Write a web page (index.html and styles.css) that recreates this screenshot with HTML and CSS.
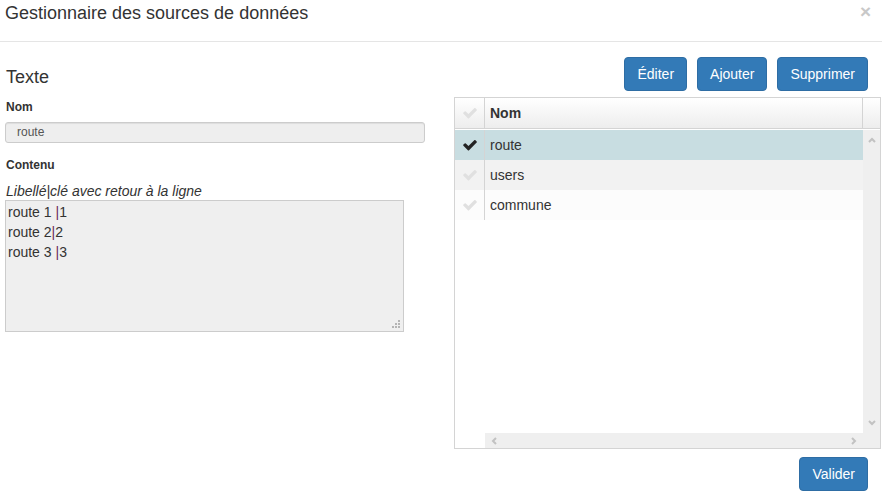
FILE: index.html
```html
<!DOCTYPE html>
<html lang="fr">
<head>
<meta charset="utf-8">
<title>Gestionnaire des sources de données</title>
<link rel="stylesheet" href="styles.css">
</head>
<body>
<div class="modal">
  <div class="modal-header">
    <h4 class="modal-title">Gestionnaire des sources de données</h4>
    <span class="close">×</span>
  </div>
  <div class="modal-body">
    <div class="left">
      <h3 class="section-title">Texte</h3>
      <div class="lbl">Nom</div>
      <div class="input">route</div>
      <div class="lbl lbl-contenu">Contenu</div>
      <div class="hint">Libellé|clé avec retour à la ligne</div>
      <div class="textarea">
        <div class="ta-line">route 1 <span class="pipe">|</span>1</div>
        <div class="ta-line">route 2<span class="pipe">|</span>2</div>
        <div class="ta-line">route 3 <span class="pipe">|</span>3</div>
        <svg class="grip" width="8" height="8" viewBox="0 0 8 8"><rect x="6" y="0" width="2" height="2"/><rect x="3" y="3" width="2" height="2"/><rect x="6" y="3" width="2" height="2"/><rect x="0" y="6" width="2" height="2"/><rect x="3" y="6" width="2" height="2"/><rect x="6" y="6" width="2" height="2"/></svg>
      </div>
    </div>
    <div class="right">
      <div class="toolbar">
        <button class="btn">Éditer</button>
        <button class="btn">Ajouter</button>
        <button class="btn">Supprimer</button>
      </div>
      <div class="grid">
        <div class="grid-head">
          <div class="hcell-check"><svg class="chk chk-light" viewBox="100 380 1580 1160"><path d="M1671 566q0 40-28 68l-724 724-136 136q-28 28-68 28t-68-28l-136-136-362-362q-28-28-28-68t28-68l136-136q28-28 68-28t68 28l294 295 656-657q28-28 68-28t68 28l136 136q28 28 28 68z"/></svg></div>
          <div class="hcell-name">Nom</div>
          <div class="hcell-scroll"></div>
        </div>
        <div class="grid-body">
          <div class="grid-main">
            <div class="grid-rows">
              <div class="row row-sel">
                <div class="cell-check"><svg class="chk chk-dark" viewBox="100 380 1580 1160"><path d="M1671 566q0 40-28 68l-724 724-136 136q-28 28-68 28t-68-28l-136-136-362-362q-28-28-28-68t28-68l136-136q28-28 68-28t68 28l294 295 656-657q28-28 68-28t68 28l136 136q28 28 28 68z"/></svg></div>
                <div class="cell-name">route</div>
              </div>
              <div class="row row-alt">
                <div class="cell-check"><svg class="chk chk-light" viewBox="100 380 1580 1160"><path d="M1671 566q0 40-28 68l-724 724-136 136q-28 28-68 28t-68-28l-136-136-362-362q-28-28-28-68t28-68l136-136q28-28 68-28t68 28l294 295 656-657q28-28 68-28t68 28l136 136q28 28 28 68z"/></svg></div>
                <div class="cell-name">users</div>
              </div>
              <div class="row row-plain">
                <div class="cell-check"><svg class="chk chk-light" viewBox="100 380 1580 1160"><path d="M1671 566q0 40-28 68l-724 724-136 136q-28 28-68 28t-68-28l-136-136-362-362q-28-28-28-68t28-68l136-136q28-28 68-28t68 28l294 295 656-657q28-28 68-28t68 28l136 136q28 28 28 68z"/></svg></div>
                <div class="cell-name">commune</div>
              </div>
            </div>
            <div class="hscroll-row">
              <div class="hscroll-spacer"></div>
              <div class="hscroll">
                <svg class="arrow" width="6" height="8" viewBox="0 0 6 8"><polyline points="5,1 2,4 5,7"/></svg>
                <svg class="arrow" width="6" height="8" viewBox="0 0 6 8"><polyline points="1,1 4,4 1,7"/></svg>
              </div>
            </div>
          </div>
          <div class="vscroll">
            <svg class="arrow" width="8" height="6" viewBox="0 0 8 6"><polyline points="1,5 4,2 7,5"/></svg>
            <svg class="arrow arrow-down" width="8" height="6" viewBox="0 0 8 6"><polyline points="1,1 4,4 7,1"/></svg>
          </div>
        </div>
      </div>
      <div class="footer">
        <button class="btn">Valider</button>
      </div>
    </div>
  </div>
</div>
</body>
</html>
```

FILE: styles.css
```css
* { box-sizing: border-box; }

body {
  margin: 0;
  background: #fff;
  font-family: "Liberation Sans", Arial, Helvetica, sans-serif;
  font-size: 14px;
  color: #333;
}

.modal {
  width: 882px;
  height: 499px;
  overflow: hidden;
}

.modal-header {
  display: flex;
  justify-content: space-between;
  align-items: flex-start;
  height: 42px;
  padding: 3px 11px 0 5px;
  border-bottom: 1px solid #e5e5e5;
}

.modal-title {
  margin: 0;
  font-size: 18px;
  font-weight: normal;
  line-height: 20px;
  color: #333;
}

.close {
  margin-top: -2px;
  font-size: 19px;
  font-weight: bold;
  line-height: 22px;
  color: #c8c8c8;
}

.modal-body {
  display: flex;
  padding-left: 5px;
}

.left {
  width: 420px;
  padding-top: 25px;
}

.section-title {
  margin: 0;
  padding-left: 1px;
  font-size: 18px;
  font-weight: normal;
  line-height: 20px;
  color: #333;
}

.lbl {
  margin-top: 13px;
  padding-left: 1px;
  font-size: 12px;
  font-weight: bold;
  line-height: 14px;
  color: #333;
}

.input {
  margin-top: 8px;
  height: 21px;
  padding: 0 11px;
  border: 1px solid #ccc;
  border-radius: 3px;
  background: #eee;
  box-shadow: inset 0 1px 1px rgba(0, 0, 0, 0.075);
  font-size: 12px;
  line-height: 19px;
  color: #555;
}

.lbl-contenu {
  margin-top: 15px;
}

.hint {
  margin-top: 11px;
  padding-left: 1px;
  font-size: 14px;
  font-style: italic;
  line-height: 16px;
  color: #333;
}

.textarea {
  position: relative;
  margin-top: 1px;
  width: 399px;
  height: 132px;
  padding: 1px 2px;
  border: 1px solid #ccc;
  background: #efefef;
  font-size: 14px;
  line-height: 20px;
  color: #333;
}

.pipe { color: #6b2a5a; }

.grip {
  position: absolute;
  right: 3px;
  bottom: 3px;
  fill: #b4b4b4;
}

.right {
  width: 427px;
  margin-left: 29px;
  padding-top: 15px;
}

.toolbar {
  display: flex;
  justify-content: flex-end;
  gap: 10px;
  padding-right: 13px;
}

.btn {
  height: 34px;
  padding: 6px 12px;
  border: 1px solid #2e6da4;
  border-radius: 4px;
  background: #337ab7;
  color: #fff;
  font-family: "Liberation Sans", Arial, Helvetica, sans-serif;
  font-size: 14px;
  line-height: 20px;
}

.grid {
  display: flex;
  flex-direction: column;
  margin-top: 6px;
  height: 352px;
  border: 1px solid #d4d4d4;
}

.grid-head {
  display: flex;
  height: 31px;
  border-bottom: 1px solid #d4d4d4;
  background: linear-gradient(#ffffff, #ededed);
}

.hcell-check {
  display: flex;
  align-items: center;
  justify-content: center;
  width: 30px;
  border-right: 1px solid #d4d4d4;
}

.hcell-name {
  flex: 1;
  padding-left: 5px;
  border-right: 1px solid #d4d4d4;
  font-weight: bold;
  line-height: 30px;
  color: #333;
}

.hcell-scroll { width: 17px; }

.grid-body {
  display: flex;
  flex: 1;
  padding-top: 1px;
}

.grid-main {
  display: flex;
  flex-direction: column;
  flex: 1;
}

.grid-rows { flex: 1; }

.row {
  display: flex;
  height: 30px;
}

.row-sel { background: #c8dde1; }
.row-alt { background: #f2f2f2; }
.row-plain { background: #fcfcfc; }

.cell-check {
  display: flex;
  align-items: center;
  justify-content: center;
  width: 30px;
  border-right: 1px solid #d4d4d4;
}

.cell-name {
  flex: 1;
  padding-left: 5px;
  line-height: 30px;
  color: #333;
}

.chk {
  width: 14px;
  height: 11px;
}

.chk-light { fill: #e0e0e0; }
.chk-dark { fill: #222; }

.hscroll-row {
  display: flex;
  height: 15px;
}

.hscroll-spacer { width: 30px; }

.hscroll {
  display: flex;
  align-items: center;
  justify-content: space-between;
  flex: 1;
  padding: 0 6px;
  background: #efefef;
}

.vscroll {
  display: flex;
  flex-direction: column;
  justify-content: space-between;
  align-items: center;
  width: 17px;
  padding: 7px 0 22px;
  background: #efefef;
}

.arrow {
  fill: none;
  stroke: #c2c2c2;
  stroke-width: 2;
}

.footer {
  display: flex;
  justify-content: flex-end;
  margin-top: 8px;
  padding-right: 13px;
}
```
